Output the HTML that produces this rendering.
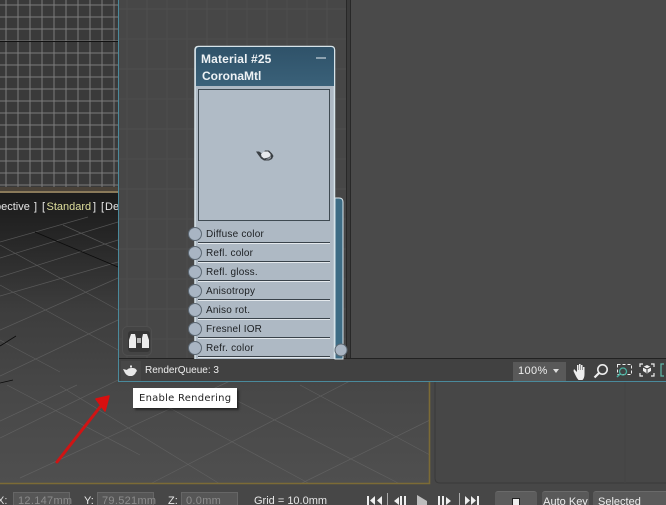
<!DOCTYPE html>
<html><head><meta charset="utf-8"><style>
html,body{margin:0;padding:0;background:#474747}
#r{position:relative;width:666px;height:505px;overflow:hidden;font-family:"Liberation Sans",sans-serif;background:#474747}
.a{position:absolute}
.t{position:absolute;white-space:nowrap;font-size:10px;color:#1c1f22;left:206px;letter-spacing:.2px;line-height:12px}
.l{position:absolute;left:198px;width:132px;height:1px;background:#e4e9ed;border-top:1px solid #39424a}
.c{position:absolute;left:188px;width:12px;height:12px;border-radius:50%;background:#a9b5c3;border:1px solid #5c6873}
.b{position:absolute;top:491px;height:20px;background:#5c5c5c;border-radius:3px 3px 0 0;border-top:1px solid #6a6a6a}
.f{position:absolute;top:492px;height:20px;width:57px;background:#565656;border:1px solid #666;box-sizing:border-box;color:#8c8c8c;font-size:11px;padding:2px 0 0 4px;white-space:nowrap;letter-spacing:.3px}
.w{position:absolute;top:495px;font-size:11px;color:#e8e8e8;white-space:nowrap;line-height:13px}
.h{position:absolute;top:200px;font-size:11px;color:#e6e6e6;white-space:nowrap;line-height:14px}
</style></head><body><div id="r">

<svg class="a" style="left:0;top:0" width="666" height="505">
<defs>
<linearGradient id="v" x1="0" y1="0" x2="0" y2="1"><stop offset="0" stop-color="#1b1b1b"/><stop offset=".15" stop-color="#262626"/><stop offset=".4" stop-color="#3d3d3d"/><stop offset=".7" stop-color="#484848"/><stop offset="1" stop-color="#4f4f4f"/></linearGradient>
<linearGradient id="hd" x1="0" y1="0" x2="0" y2="1"><stop offset="0" stop-color="#2f5269"/><stop offset="1" stop-color="#3a6179"/></linearGradient>
<pattern id="g" width="12" height="12" patternUnits="userSpaceOnUse" x="-6.500" y="4.500"><rect width="12" height="12" fill="#3a3a3a"/><path d="M0 .5H12M.5 0V12" stroke="#7c7c7c" stroke-width="1"/></pattern>
<pattern id="g2" width="60" height="60" patternUnits="userSpaceOnUse" x="14" y="5"><path d="M13 0V60M0 4H60" stroke="#4f4f4f" stroke-width="1" fill="none"/><path d="M33 0V60M53 0V60M0 34H60" stroke="#4c4c4c" stroke-width="1"/></pattern>
</defs>
<rect x="0" y="0" width="118" height="187" fill="url(#g)"/>
<path d="M0 41.500H118" stroke="#111"/>
<rect x="0" y="187" width="118" height="5" fill="#4a4238"/>
<rect x="0" y="191" width="118" height="2" fill="#8a7a5a"/>
<rect x="0" y="193" width="430" height="290" fill="url(#v)"/>
<g stroke="#686868" stroke-width=".7" fill="none" opacity=".7">
<path d="M0 242L88 217M0 258L118 222M0 277L118 240M0 296L118 262M0 330L118 278M0 376L118 320M0 421L77 385M0 438L175 352M20 478L230 381M150 484L350 381M300 484L430 420M63 225L118 250M0 245L118 310M0 285L118 350M0 340L60 372M7 385L140 455M60 386L220 484M140 392L310 484M220 392L400 484M300 385L430 455"/>
</g>
<path d="M35 232L118 267M0 346L16 336M0 383L13 380" stroke="#0c0c0c" stroke-width=".8" fill="none"/>
<path d="M0 483.500H429.500V381" fill="none" stroke="#7c6b36" stroke-width="1.600"/>
<rect x="431" y="381" width="235" height="104" fill="#474747"/>
<path d="M435 381V478Q435 483 440 483H666" fill="none" stroke="#3a3a3a"/>
<path d="M625 381V483" stroke="#434343"/>
<rect x="118" y="0" width="548" height="382" fill="#474747"/>
<rect x="119" y="0" width="227" height="359" fill="url(#g2)"/>
<path d="M118.500 0V381.500H666" fill="none" stroke="#4a8a9c"/>
<rect x="346" y="0" width="5" height="359" fill="#3b3b3b"/>
<path d="M346.500 0V359M350.500 0V359" stroke="#282828"/>
<rect x="351" y="0" width="315" height="359" fill="#4a4a4a"/>
<rect x="119" y="359" width="547" height="22" fill="#414141"/>
<path d="M119 358.500H666" stroke="#222"/>
<path d="M335 198h4q4 0 4 4V359H335Z" fill="#3d6c85" stroke="#dbe6ec"/>
<path d="M195 359V50q0-3.500 3.500-3.500H331q3.500 0 3.500 3.500V359" fill="#aeb9c4" stroke="#d7e4ea" stroke-width="1.500"/>
<path d="M196 86V50q0-3 3-3H331q3 0 3 3V86Z" fill="url(#hd)"/>
<rect x="198.500" y="89.500" width="131" height="131" fill="#b0bbc6" stroke="#3f4a52"/>
<circle cx="341" cy="350" r="6" fill="#a9b5c3" stroke="#5c6873"/>
<path d="M316 58H326" stroke="#e8eef2" stroke-width="1"/>
<!-- teapot preview -->
<path d="M256 151.500l3 0 3 2 3-3h4l3 3 1.500 2.500-1.500 3-3 1.500h-5l-3-2-3-4z" fill="#3a3f44"/>
<path d="M261 154l3-2.500h4l2.500 2.500v2l-2 1.500-4.500 1-2.500-2z" fill="#e6e9ed"/>
<path d="M266 159l3-1 2-2v2l-2 1.500h-3z" fill="#8f969e"/>
<!-- binocular button -->
<rect x="122.500" y="326.500" width="29" height="29" rx="5" fill="#444" stroke="#4f4f4f"/>
<rect x="128" y="331" width="22" height="21" rx="3" fill="#363636"/>
<path d="M131 334h4l1 4v10h-7v-8zM143 334h4l2 6v8h-7v-10z" fill="#ececec"/>
<path d="M137 338h4v5h-4z" fill="#b5b5b5"/>
<!-- render teapot -->
<rect x="121" y="361" width="20" height="20" fill="#474747"/>
<path d="M123 369l4 1q1-2 5-2h1q3 0 4 3l-1 1q-1 3-4 4h-3q-3-1-4-3z" fill="#e8e8e8"/>
<rect x="130" y="365.500" width="2" height="2" fill="#e8e8e8"/>
<!-- zoom field -->
<rect x="513" y="362" width="53" height="19" fill="#595959"/>
<path d="M553 369h6l-3 4z" fill="#ddd"/>
<!-- hand -->
<path d="M574 369l3 3v-7h1.500v5h.5v-6h1.500v6h.5v-5h1.500v5h.5v-3h1.500v7q0 4-2 6h-4q-2-2-5-9z" fill="#eee"/>
<!-- magnifier -->
<circle cx="602.500" cy="369.500" r="4.700" fill="none" stroke="#eee" stroke-width="1.600"/>
<path d="M599 373l-4.500 4.500" stroke="#eee" stroke-width="2.200"/>
<!-- zoom region -->
<rect x="617.500" y="364.500" width="14" height="10" fill="none" stroke="#eee" stroke-dasharray="3 2"/>
<circle cx="623" cy="371.500" r="3.500" fill="none" stroke="#49b0a0" stroke-width="1.300"/>
<path d="M620 374l-3 3" stroke="#49b0a0" stroke-width="1.500"/>
<!-- zoom extents -->
<path d="M640 367v-3h3M651 364h3v3M654 373v3h-3M643 376h-3v-3" fill="none" stroke="#eee" stroke-width="1.200"/>
<path d="M647 365l4 2v4l-4 2.500-4-2.500v-4z" fill="#eee"/>
<path d="M643 367l4 2 4-2M647 369v4" stroke="#333" fill="none"/>
<path d="M664 364h-3v12h3" fill="none" stroke="#5fb8a8" stroke-width="1.200"/>
<!-- arrow -->
<path d="M57 462L100 407" stroke="#cf1414" stroke-width="3" stroke-linecap="round"/>
<path d="M96 399L109 396 105 411 Z" fill="#d90f0f" stroke="#d90f0f" stroke-width="1.500" stroke-linejoin="round"/>
<!-- playback -->
<g fill="#eee">
<path d="M367 496h2v9h-2zM375 496v9l-5-4.500zM382 496v9l-5-4.500z"/>
<path d="M387 493h1v12h-1z" fill="#aaa"/>
<path d="M399 497v8l-5-4zM400 496h2v9h-2zM404 496h2v9h-2z"/>
<path d="M417 495l10 6v4h-10z" fill="#bdbdbd"/>
<path d="M438 496h2v9h-2zM442 496h2v9h-2zM446 497l5 4-5 4z"/>
<path d="M459 493h1v12h-1z" fill="#aaa"/>
<path d="M465 496l5 4.500-5 4.500zM471 496l5 4.500-5 4.500zM477 496h2v9h-2z"/>
</g>
</svg>

<div class="h" style="left:-5px">pective</div>
<div class="h" style="left:34px">]</div>
<div class="h" style="left:42px">[</div>
<div class="h" style="left:46.500px;color:#dede9c">Standard</div>
<div class="h" style="left:93px">]</div>
<div class="h" style="left:101px">[</div>
<div class="h" style="left:105px;width:13px;overflow:hidden">De</div>

<div class="a" style="left:201px;top:52px;font-size:12px;font-weight:bold;color:#eef2f5;white-space:nowrap;line-height:14px;letter-spacing:.15px">Material #25</div>
<div class="a" style="left:202px;top:69px;font-size:12px;font-weight:bold;color:#eef2f5;white-space:nowrap;line-height:14px">CoronaMtl</div>

<div class="t" style="top:229px">Diffuse color</div><div class="l" style="top:242px"></div><div class="c" style="top:227px"></div>
<div class="t" style="top:248px">Refl. color</div><div class="l" style="top:261px"></div><div class="c" style="top:246px"></div>
<div class="t" style="top:267px">Refl. gloss.</div><div class="l" style="top:280px"></div><div class="c" style="top:265px"></div>
<div class="t" style="top:286px">Anisotropy</div><div class="l" style="top:299px"></div><div class="c" style="top:284px"></div>
<div class="t" style="top:305px">Aniso rot.</div><div class="l" style="top:318px"></div><div class="c" style="top:303px"></div>
<div class="t" style="top:324px">Fresnel IOR</div><div class="l" style="top:337px"></div><div class="c" style="top:322px"></div>
<div class="t" style="top:343px">Refr. color</div><div class="l" style="top:356px"></div><div class="c" style="top:341px"></div>

<div class="a" style="left:145px;top:365px;font-size:10px;color:#eee;white-space:nowrap;line-height:12px">RenderQueue: 3</div>
<div class="a" style="left:518px;top:365px;font-size:11px;color:#eee;white-space:nowrap;line-height:13px;letter-spacing:.4px">100%</div>

<div class="a" style="left:133px;top:388px;width:104px;height:20px;box-sizing:border-box;background:#fff;box-shadow:2px 2px 2px rgba(0,0,0,.5);font-family:'DejaVu Sans',sans-serif;font-size:10px;color:#222;padding:4px 0 0 6px;white-space:nowrap;line-height:13px;letter-spacing:.25px">Enable Rendering</div>

<div class="w" style="left:-3px;color:#ddd">X:</div>
<div class="f" style="left:13px">12.147mm</div>
<div class="w" style="left:84px">Y:</div>
<div class="f" style="left:97px">79.521mm</div>
<div class="w" style="left:168px">Z:</div>
<div class="f" style="left:181px">0.0mm</div>
<div class="w" style="left:254px;top:495px">Grid = 10.0mm</div>

<div class="b" style="left:495px;width:42px"></div>
<div class="a" style="left:512px;top:498px;width:6px;height:8px;background:#eee;border:1px solid #222"></div>
<div class="b" style="left:542px;width:47px;background:#595959;color:#eee;font-size:11px;text-align:center;line-height:18px;padding-top:1px;height:18px">Auto Key</div>
<div class="b" style="left:593px;width:73px;background:#5a5a5a;color:#eee;font-size:11px;padding:1px 0 0 5px;line-height:18px;height:18px">Selected</div>

</div></body></html>
